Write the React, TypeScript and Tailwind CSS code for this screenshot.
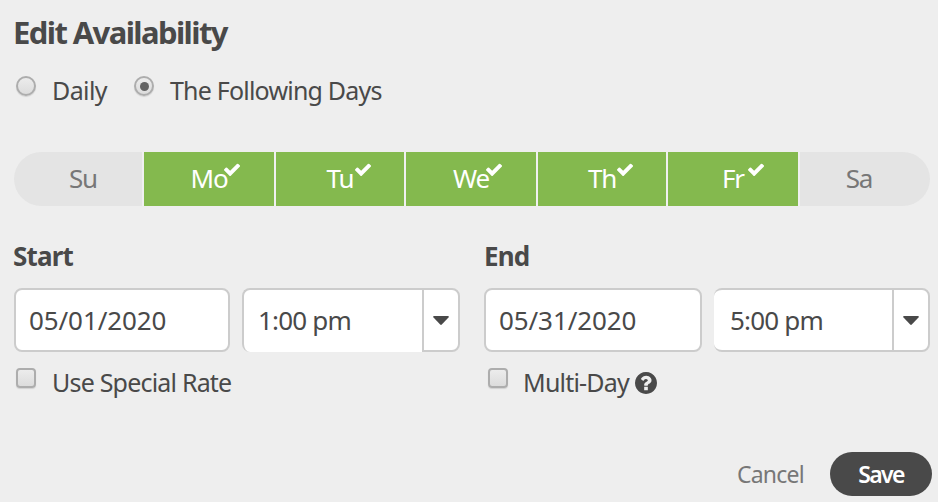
import { useState } from 'react'
import clsx from 'clsx'

const DAYS = [
  { name: 'Su', width: 'w-[128px]', pad: 'pl-[10px]' },
  { name: 'Mo', width: 'w-[130px]', pad: '' },
  { name: 'Tu', width: 'w-[128px]', pad: '' },
  { name: 'We', width: 'w-[130px]', pad: '' },
  { name: 'Th', width: 'w-[128px]', pad: '' },
  { name: 'Fr', width: 'w-[130px]', pad: '' },
  { name: 'Sa', width: 'w-[130px]', pad: 'pr-3' },
]

function CheckIcon() {
  return (
    <svg className="h-[13px] w-4" viewBox="121 270 1550 1252" preserveAspectRatio="none" fill="currentColor">
      <path d="M1671 566q0 40-28 68l-724 724-136 136q-28 28-68 28t-68-28l-136-136-362-362q-28-28-28-68t28-68l136-136q28-28 68-28t68 28l294 295 656-657q28-28 68-28t68 28l136 136q28 28 28 68z" />
    </svg>
  )
}

function HelpIcon() {
  return (
    <svg className="h-[22px] w-[22px]" viewBox="128 128 1536 1536" fill="currentColor">
      <path d="M1024 1376v-192q0-14-9-23t-23-9h-192q-14 0-23 9t-9 23v192q0 14 9 23t23 9h192q14 0 23-9t9-23zm256-672q0-88-55.5-163t-138.5-116-170-41q-243 0-371 213-15 24 8 42l132 100q7 6 19 6 16 0 25-12 53-68 86-92 34-24 86-24 48 0 85.5 26t37.5 59q0 38-20 61t-68 45q-63 28-115.5 86.5t-52.5 125.5v36q0 14 9 23t23 9h192q14 0 23-9t9-23q0-19 21.5-49.5t54.5-49.5q32-18 49-28.5t46-35 44.5-48 28-60.5 12.5-81zm384 192q0 209-103 385.5t-279.5 279.5-385.5 103-385.5-103-279.5-279.5-103-385.5 103-385.5 279.5-279.5 385.5-103 385.5 103 279.5 279.5 103 385.5z" />
    </svg>
  )
}

function Radio({ checked, onClick }: { checked: boolean; onClick: () => void }) {
  return (
    <button
      role="radio"
      aria-checked={checked}
      onClick={onClick}
      className="mt-1 flex h-5 w-5 shrink-0 items-center justify-center rounded-full border-2 border-[#adadad] bg-linear-to-b from-[#ececec] to-[#dcdcdc] shadow-[0_1px_1px_rgba(0,0,0,0.12)]"
    >
      {checked && <span className="h-[9px] w-[9px] rounded-full bg-[#636363]" />}
    </button>
  )
}

function Checkbox() {
  return (
    <button
      role="checkbox"
      aria-checked={false}
      className="mt-[5px] h-5 w-5 shrink-0 rounded-[4px] border-2 border-[#adadad] bg-linear-to-b from-[#ececec] to-[#dcdcdc] shadow-[0_1px_1px_rgba(0,0,0,0.12)]"
    />
  )
}

function Caret() {
  return (
    <svg className="h-[9px] w-4" viewBox="0 0 16 9" fill="#494949">
      <path d="M1 0h14q1.4.3.5 1.5L8.8 8.6q-.8.6-1.6 0L.5 1.5Q-.4.3 1 0z" />
    </svg>
  )
}

export default function App() {
  const [following, setFollowing] = useState(true)
  const [selected, setSelected] = useState(['Mo', 'Tu', 'We', 'Th', 'Fr'])

  const toggle = (day: string) =>
    setSelected((prev) => (prev.includes(day) ? prev.filter((d) => d !== day) : [...prev, day]))

  return (
    <div className="h-[502px] w-[938px] overflow-hidden bg-[#eeeeee] font-['Noto_Sans',sans-serif] text-[25px] leading-9 tracking-[-0.8px] text-[#494949]">
      <h1 className="pt-[14px] pl-[13px] text-[31px] font-bold tracking-[-1.6px]">Edit Availability</h1>

      <div className="mt-[22px] flex items-start pl-4">
        <Radio checked={!following} onClick={() => setFollowing(false)} />
        <span className="ml-4 w-[82px] tracking-[-0.6px]">Daily</span>
        <Radio checked={following} onClick={() => setFollowing(true)} />
        <span className="ml-4">The Following Days</span>
      </div>

      {/* Weekday toggles */}
      <div className="mt-11 ml-[14px] flex h-[54px] w-[916px] gap-[2px] overflow-hidden rounded-full bg-[#f0f0f0]">
        {DAYS.map((day) => {
          const on = selected.includes(day.name)
          return (
            <button
              key={day.name}
              onClick={() => toggle(day.name)}
              className={clsx(
                'relative flex shrink-0 items-center justify-center pb-[2px] text-[26px] tracking-[-1.2px]',
                day.width,
                day.pad,
                on ? 'bg-[#84b94e] text-white' : 'bg-[#e4e4e4] text-[#777777]'
              )}
            >
              {day.name}
              {on && (
                <span className="absolute top-[11px] left-[calc(50%+15px)]">
                  <CheckIcon />
                </span>
              )}
            </button>
          )
        })}
      </div>

      {/* Date range */}
      <div className="mt-8 flex pl-[13px]">
        <div className="w-[471px]">
          <h2 className="text-[26px] font-bold tracking-[-0.8px]">Start</h2>
          <div className="mt-[14px] ml-px flex h-16">
            <div className="flex w-[216px] items-center rounded-lg border-2 border-[#cccccc] bg-white pl-[13px] text-[26px] tracking-[-0.1px]">
              05/01/2020
            </div>
            <div className="ml-3 flex w-[218px]">
              <div className="flex w-[180px] items-center rounded-l-lg border-t-2 border-l-2 border-[#cccccc] bg-white pb-[2px] pl-[14px] text-[26px]">
                1:00 pm
              </div>
              <div className="flex w-[38px] items-center justify-center rounded-r-lg border-2 border-[#cccccc] bg-white">
                <Caret />
              </div>
            </div>
          </div>
          <div className="mt-[11px] flex pl-[3px]">
            <Checkbox />
            <span className="mt-px ml-4">Use Special Rate</span>
          </div>
        </div>

        <div>
          <h2 className="text-[26px] font-bold tracking-[-0.8px]">End</h2>
          <div className="mt-[14px] flex h-16">
            <div className="flex w-[218px] items-center rounded-lg border-2 border-[#cccccc] bg-white pl-[13px] text-[26px] tracking-[-0.1px]">
              05/31/2020
            </div>
            <div className="ml-3 flex w-[216px]">
              <div className="flex w-[178px] items-center rounded-l-lg border-y-2 border-[#cccccc] bg-white pl-4 text-[26px]">
                5:00 pm
              </div>
              <div className="flex w-[38px] items-center justify-center rounded-r-lg border-2 border-[#cccccc] bg-white">
                <Caret />
              </div>
            </div>
          </div>
          <div className="mt-[11px] flex pl-1">
            <Checkbox />
            <span className="mt-px ml-[15px] w-[112px]">Multi-Day</span>
            <span className="mt-[9px]">
              <HelpIcon />
            </span>
          </div>
        </div>
      </div>

      <div className="mt-[52px] flex items-center pl-[737px] text-[23px]">
        <button className="w-[93px] pb-px text-left text-[#777777]">Cancel</button>
        <button className="h-11 w-[102px] rounded-full bg-[#494949] pb-px font-semibold tracking-[-1.6px] text-white">
          Save
        </button>
      </div>
    </div>
  )
}
